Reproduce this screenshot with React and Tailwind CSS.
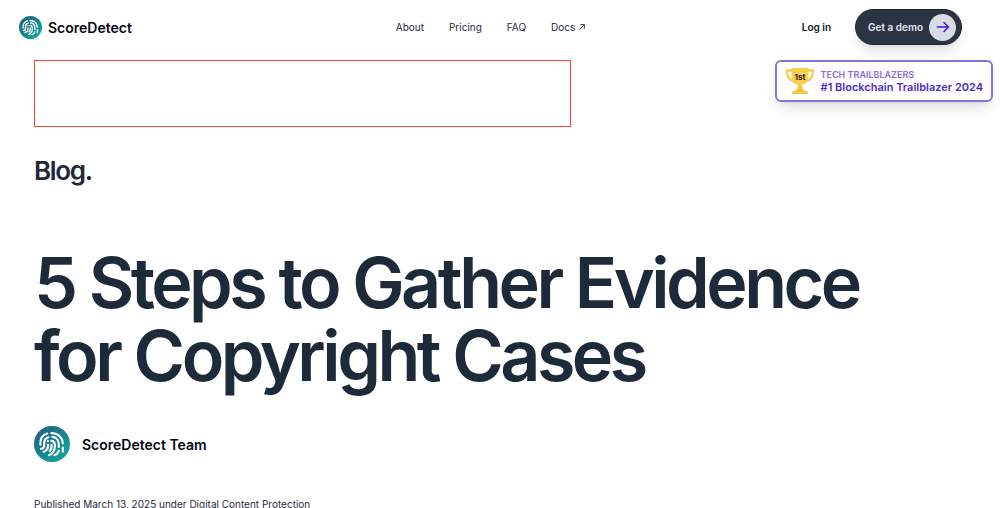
import React from 'react';

const navLinks = ['About', 'Pricing', 'FAQ'];

const Logo = ({ className }) => (
  <svg viewBox="0 0 36 36" className={className} fill="none" aria-hidden="true">
    <defs>
      <linearGradient id="logo-fill" x1="6" y1="4" x2="30" y2="33" gradientUnits="userSpaceOnUse">
        <stop stopColor="#1f6584" />
        <stop offset="1" stopColor="#13a59b" />
      </linearGradient>
    </defs>
    <circle cx="18" cy="18" r="18" fill="url(#logo-fill)" />
    <g stroke="#fff" strokeWidth="2.1" strokeLinecap="round" strokeLinejoin="round">
      <path d="M6.300 18.800C6 13.500 8.500 9 13.300 7.600" />
      <path d="M17.300 7C23.500 7 28.300 11 28.800 17.500" />
      <path d="M28.800 21.500V25.800" />
      <path d="M7 22.800C9.500 22.600 10.300 21 10.200 18.500C10 14.500 11.500 11.800 14.500 11.200" />
      <path d="M18.300 10.900C22.500 11.200 24.800 14.500 24.800 18.500V21" />
      <path d="M24.800 24.800C24.200 27 22.500 28.600 20.300 29.200" />
      <path d="M13.900 15V15.100" />
      <path d="M14 18.700C14.300 22.500 12.500 25 9.500 25.800" />
      <path d="M17.300 14.900C20 14.900 20.900 16.500 20.900 19.500C20.900 24.500 19 27.600 15 29.200" />
      <path d="M17.500 18.700C17.700 21.800 17 23.800 15.800 25" />
    </g>
  </svg>
);

const Trophy = () => (
  <svg viewBox="0 0 30 28" className="h-7 w-[30px] shrink-0" role="img" aria-label="1st place trophy">
    <path d="M7 3.500H1.700C1.700 9.500 4.500 13.500 10 14.500M23 3.500h5.300C28.300 9.500 25.500 13.500 20 14.500" fill="none" stroke="#f8cf55" strokeWidth="2.400" />
    <path d="M6.500 1h17v7.500c0 5.500-2.500 8.500-6.300 9.500v3.500h-4.400V18C9 17 6.500 14 6.500 8.500z" fill="#f8cf55" />
    <path d="M12.500 20h5l1.200 3.500h1.500c1.800 0 2.800 1.500 2.800 3.500H7c0-2 1-3.500 2.800-3.500h1.500z" fill="#f5c648" />
    <text x="15" y="12.500" textAnchor="middle" fontSize="8" fontWeight="700" fill="#1f1a10">1st</text>
  </svg>
);

const Header = () => (
  <header className="flex h-[54px] items-center justify-between pr-[38px] pl-[19px]">
    <div className="flex flex-1">
      <a href="#" className="flex items-center gap-[6px] text-[14px] font-semibold text-gray-950">
        <Logo className="h-[23px] w-[23px]" />
        ScoreDetect
      </a>
    </div>
    <nav className="flex items-center gap-[25px] text-[10px] text-gray-800">
      {navLinks.map((label) => (
        <a key={label} href="#">{label}</a>
      ))}
      <a href="#" className="flex items-center gap-1">
        Docs
        <svg viewBox="0 0 6 6" className="h-[6px] w-[6px]" fill="none" stroke="currentColor" aria-hidden="true">
          <path d="M.5 5.500L5.300.7M1.300.6h4.100v4.100" strokeWidth=".9" />
        </svg>
      </a>
    </nav>
    <div className="flex flex-1 items-center justify-end gap-6">
      <a href="#" className="text-[10px] font-semibold text-gray-900">Log in</a>
      <button className="flex h-9 items-center gap-[6px] rounded-full border border-[#1d2635] bg-[#2b3443] pr-[5px] pl-3 text-[10px] font-semibold text-gray-200 shadow-lg">
        Get a demo
        <span className="flex h-[27px] w-[27px] items-center justify-center rounded-full bg-[#d8dce5]">
          <svg viewBox="0 0 14 14" className="h-[14px] w-[14px]" fill="none" stroke="#4318d8" strokeWidth="1.500" strokeLinecap="round" strokeLinejoin="round" aria-hidden="true">
            <path d="M1.300 7h11M8 2.500L12.500 7L8 11.500" />
          </svg>
        </span>
      </button>
    </div>
  </header>
);

const App = () => {
  return (
    <div className="bg-white font-['Inter',sans-serif] text-gray-800">
      <Header />

      {/* Banner slot and award */}
      <div className="flex items-start justify-between pt-[6px] pr-[7px] pl-[34px]">
        <div className="h-[67px] w-[56%] border border-[#ff4438]" />
        <a href="#" className="flex h-[42px] items-center gap-[6px] rounded-md border-2 border-[#8b70dc] bg-white px-2 shadow-lg">
          <Trophy />
          <span className="flex flex-col leading-[13px] whitespace-nowrap">
            <span className="text-[9px] font-semibold text-[#8a6be0]">TECH TRAILBLAZERS</span>
            <span className="text-[11px] font-semibold text-[#4e2bc8]">#1 Blockchain Trailblazer 2024</span>
          </span>
        </a>
      </div>

      <main className="px-[34px] pt-7">
        <p className="text-[26px] leading-8 font-semibold tracking-tighter">Blog.</p>

        <article className="pt-[59px]">
          <h1 className="max-w-[880px] text-[70px] leading-[73px] font-semibold tracking-tighter">
            5 Steps to Gather Evidence for Copyright Cases
          </h1>

          <div className="mt-[34px] flex items-center gap-3">
            <Logo className="h-9 w-9" />
            <span className="text-[14px] font-semibold text-gray-950">ScoreDetect Team</span>
          </div>

          <p className="mt-[34px] pb-4 text-[10px] leading-4">
            Published March 13, 2025 under <a href="#">Digital Content Protection</a>
          </p>
        </article>
      </main>
    </div>
  );
};

export default App;
